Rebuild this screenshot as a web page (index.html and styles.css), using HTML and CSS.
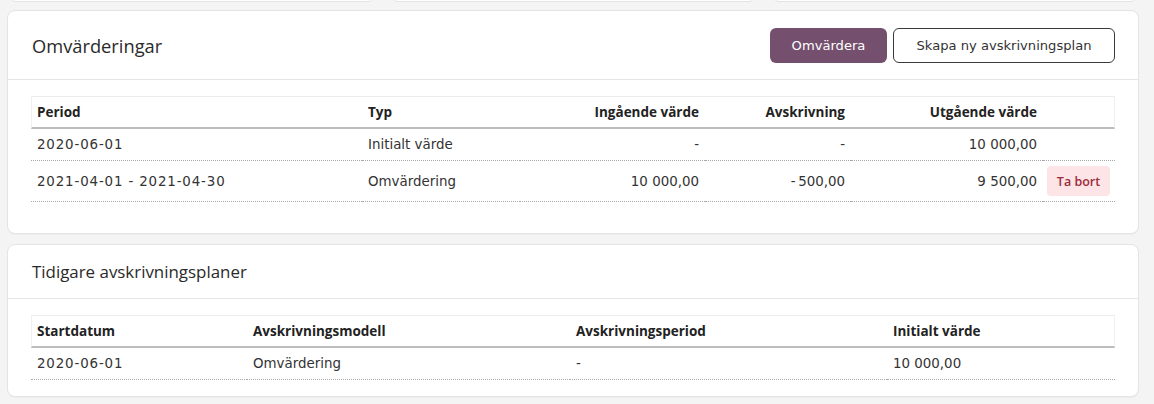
FILE: index.html
```html
<!DOCTYPE html>
<html lang="sv">
<head>
<meta charset="utf-8">
<link rel="stylesheet" href="styles.css">
</head>
<body>
<div class="top-row">
  <div class="stub"></div>
  <div class="stub"></div>
  <div class="stub"></div>
</div>

<section class="card">
  <header class="card-head">
    <h2 class="card-title title-1">Omvärderingar</h2>
    <div class="actions">
      <button class="btn btn-primary">Omvärdera</button>
      <button class="btn btn-outline">Skapa ny avskrivningsplan</button>
    </div>
  </header>
  <div class="card-body body-1">
    <table class="grid grid-1">
      <colgroup>
        <col class="c1"><col class="c2"><col class="c3"><col class="c4"><col class="c5"><col class="c6">
      </colgroup>
      <thead>
        <tr><th>Period</th><th>Typ</th><th class="num">Ingående värde</th><th class="num">Avskrivning</th><th class="num">Utgående värde</th><th></th></tr>
      </thead>
      <tbody>
        <tr class="r-short"><td class="date">2020-06-01</td><td>Initialt värde</td><td class="num">-</td><td class="num">-</td><td class="num">10 000,00</td><td></td></tr>
        <tr><td class="date">2021-04-01 - 2021-04-30</td><td>Omvärdering</td><td class="num">10 000,00</td><td class="num">-&#8201;500,00</td><td class="num">9 500,00</td><td class="act"><button class="btn-danger">Ta bort</button></td></tr>
      </tbody>
    </table>
  </div>
</section>

<section class="card card-2">
  <header class="card-head head-2">
    <h2 class="card-title title-2">Tidigare avskrivningsplaner</h2>
  </header>
  <div class="card-body body-2">
    <table class="grid grid-2">
      <colgroup>
        <col class="d1"><col class="d2"><col class="d3"><col class="d4">
      </colgroup>
      <thead>
        <tr><th>Startdatum</th><th>Avskrivningsmodell</th><th>Avskrivningsperiod</th><th>Initialt värde</th></tr>
      </thead>
      <tbody>
        <tr class="r-short"><td class="date">2020-06-01</td><td>Omvärdering</td><td>-</td><td>10 000,00</td></tr>
      </tbody>
    </table>
  </div>
</section>
</body>
</html>
```

FILE: styles.css
```css
* { box-sizing: border-box; }
html, body { margin: 0; }
body {
  background: #f4f4f4;
  padding: 0 15px 0 7px;
  font-family: "DejaVu Sans", "Liberation Sans", sans-serif;
  color: #333;
  height: 404px;
  overflow: hidden;
}
.top-row {
  display: flex;
  gap: 18px;
  padding: 0 2px 0 3px;
  margin-top: -10px;
  height: 12px;
}
.stub {
  flex: 1;
  background: #fff;
  border: 1px solid #e4e4e4;
  border-radius: 8px;
}
.card {
  background: #fff;
  border: 1px solid #e4e4e4;
  border-radius: 8px;
  margin-top: 8px;
  box-shadow: 0 1px 1px rgba(0,0,0,0.03);
}
.card-2 { margin-top: 10px; }
.card-head {
  display: flex;
  align-items: center;
  justify-content: space-between;
  height: 69px;
  padding: 0 23px 0 24px;
  border-bottom: 1px solid #e6e6e6;
}
.head-2 { height: 54px; }
.card-title {
  margin: 0;
  font-family: "Open Sans", "Liberation Sans", sans-serif;
  font-weight: 400;
  color: #2a2a2a;
}
.title-1 { font-size: 18.3px; }
.title-2 { font-size: 16.9px; }
.actions { display: flex; gap: 6px; }
.btn {
  font-family: "DejaVu Sans", sans-serif;
  font-size: 13.1px;
  height: 35px;
  border-radius: 6px;
  padding: 0;
  cursor: pointer;
}
.btn-primary {
  background: #74506e;
  color: #fff;
  border: none;
  width: 117px;
}
.btn-outline {
  background: #fff;
  color: #333;
  border: 1px solid #3a3a3a;
  width: 222px;
}
.card-body { padding: 16px 23px 31px; }
.body-2 { padding-bottom: 16px; }
.grid {
  width: 100%;
  border-collapse: separate;
  border-spacing: 0;
  table-layout: fixed;
  font-size: 13.4px;
}
.grid thead th {
  text-align: left;
  font-family: "Open Sans", "Liberation Sans", sans-serif;
  font-size: 13.5px;
  font-weight: 700;
  color: #222;
  height: 33px;
  padding: 0 6px;
  border-top: 1px solid #ececec;
  border-bottom: 2px solid #bdbdbd;
}
.grid thead th:first-child { border-left: 1px solid #f0f0f0; padding-left: 5px; }
.grid thead th:last-child { border-right: 1px solid #f0f0f0; }
.grid th.num, .grid td.num { text-align: right; }
.grid td {
  padding: 0 6px;
  height: 41px;
  border-bottom: 1px dotted #a8a8a8;
  white-space: nowrap;
  color: #333;
}
.grid tr.r-short td { height: 32px; }
.date { letter-spacing: 0.85px; }
.c1 { width: 331px; }
.c2 { width: 158px; }
.c3 { width: 185px; }
.c4 { width: 146px; }
.c5 { width: 192px; }
.c6 { width: 72px; }
.d1 { width: 216px; }
.d2 { width: 323px; }
.d3 { width: 317px; }
.d4 { width: 228px; }
.grid td.act { padding: 0 4px; }
.btn-danger {
  font-family: "Open Sans", "Liberation Sans", sans-serif;
  font-size: 12.5px;
  font-weight: 600;
  background: #fde4e6;
  color: #9c2c3b;
  border: none;
  border-radius: 4px;
  width: 63px;
  height: 30px;
  padding: 0;
}
```
